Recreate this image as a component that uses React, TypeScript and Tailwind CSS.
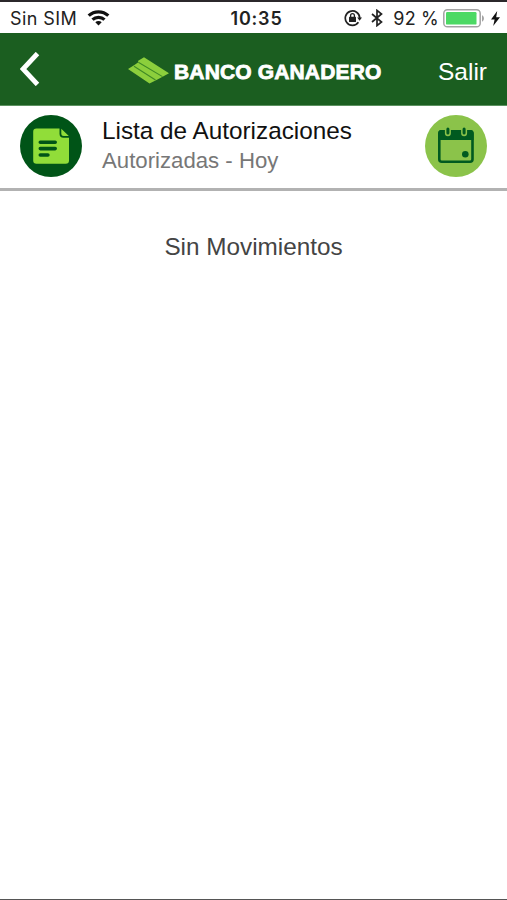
function WifiIcon() {
  return (
    <svg width="23" height="16" viewBox="0 0 22 16" fill="none" stroke="#111" strokeWidth="3.2">
      <path d="M1.2 5.7a14.2 14.2 0 0 1 19.6 0" />
      <path d="M5 9.7a8.8 8.8 0 0 1 12 0" />
      <path d="M11 15.6 7.8 12.3a4.6 4.6 0 0 1 6.4 0Z" fill="#111" stroke="none" />
    </svg>
  );
}

function RotationLockIcon() {
  return (
    <svg width="18" height="18" viewBox="0 0 18 18" fill="none" stroke="#222">
      <path d="M14.4 13.3A7.2 7.2 0 1 1 15.7 9" strokeWidth="1.7" />
      <path d="M13.2 8.6h4.8l-2.4 3.2Z" fill="#222" stroke="none" />
      <rect x="5" y="7.8" width="7" height="5.2" rx="0.6" fill="#222" stroke="none" />
      <path d="M6.6 8.2V6.6a1.9 1.9 0 0 1 3.8 0v1.6" strokeWidth="1.3" />
    </svg>
  );
}

function BluetoothIcon() {
  return (
    <svg width="12" height="18" viewBox="0 0 12 18" fill="none" stroke="#222" strokeWidth="1.7">
      <path d="M1 5l9.5 8L6 16.6V1.4L10.5 5 1 13" />
    </svg>
  );
}

function BatteryIcon() {
  return (
    <svg width="42" height="19" viewBox="0 0 42 19">
      <rect x="0.8" y="0.8" width="36.4" height="17" rx="3.6" fill="#fff" stroke="#a3a3a3" strokeWidth="1.5" />
      <rect x="3" y="3" width="30.5" height="12.6" rx="1.2" fill="#4cd964" />
      <path d="M39 6.2c2.6 1 2.6 5.4 0 6.4Z" fill="#a3a3a3" />
    </svg>
  );
}

function BoltIcon() {
  return (
    <svg width="9" height="15" viewBox="0 0 9 15">
      <path d="M6.2 0 0 8.4h3.6L2.2 15 9 6.2H5.2Z" fill="#111" />
    </svg>
  );
}

function BankLogo() {
  return (
    <svg width="42" height="27" viewBox="0 0 42 27" className="shrink-0">
      <path
        d="M0 12 6 8.3 10 5.6 10.2 3.7 16 .3 41 16.2 35.5 19.3 29 22.8 21.5 26.5Z"
        fill="#8ccf3c"
      />
      <path d="M6 9.3 27.5 23M10.3 5.2 34.5 19.6" stroke="#3f8a25" strokeWidth="1.1" />
    </svg>
  );
}

function ListIcon() {
  return (
    <svg width="62" height="62" viewBox="0 0 62 62">
      <circle cx="31" cy="31" r="31" fill="#005417" />
      <path
        d="M16.5 13.5h23v5.2a4 4 0 0 0 4 4H49v22.8a3.3 3.3 0 0 1-3.3 3.3H16.5a3.3 3.3 0 0 1-3.3-3.3V16.8a3.3 3.3 0 0 1 3.3-3.3Z"
        fill="#91dd39"
      />
      <path d="M41.3 13.8 48.8 21h-5a2.5 2.5 0 0 1-2.5-2.5Z" fill="#91dd39" />
      <path
        d="M20.3 27.2h14.9M20.3 33.6h14.9M20.3 40h7.6"
        stroke="#005417"
        strokeWidth="3.6"
        strokeLinecap="round"
      />
    </svg>
  );
}

function CalendarIcon() {
  return (
    <svg width="62" height="62" viewBox="0 0 62 62">
      <circle cx="31" cy="31" r="31" fill="#8bc34a" />
      <rect x="14.3" y="16.2" width="33.2" height="30.6" rx="2.5" fill="none" stroke="#005a20" strokeWidth="2.6" />
      <path d="M13.2 18a3 3 0 0 1 3-3h29.4a3 3 0 0 1 3 3v7H13.2Z" fill="#005a20" />
      <path d="M22.9 14v4.2M39.1 14v4.2" stroke="#8bc34a" strokeWidth="6" strokeLinecap="round" />
      <path d="M22.9 14v4M39.1 14v4" stroke="#005a20" strokeWidth="3" strokeLinecap="round" />
      <circle cx="40.3" cy="39.3" r="3.3" fill="#005a20" />
    </svg>
  );
}

function StatusBar() {
  return (
    <div className="grid h-[33px] grid-cols-[1fr_auto_1fr] items-center border-t-2 border-[#2b282b] bg-white pr-[7px] pl-[10px] pt-px font-['Inter',sans-serif] text-[#222]">
      <div className="flex items-center gap-[10px]">
        <span className="text-[18px] tracking-[0.4px]">Sin SIM</span>
        <WifiIcon />
      </div>
      <span className="pl-[3px] text-[18px] font-semibold tracking-[0.8px]">10:35</span>
      <div className="flex items-center justify-end">
        <RotationLockIcon />
        <span className="ml-[9px] flex">
          <BluetoothIcon />
        </span>
        <span className="mr-1 ml-[10px] text-[18px] tracking-[0.2px] whitespace-nowrap">92 %</span>
        <BatteryIcon />
        <span className="ml-[6px] flex">
          <BoltIcon />
        </span>
      </div>
    </div>
  );
}

function Header() {
  return (
    <header className="flex h-[73px] items-center border-b border-[#5c9160] bg-[#1b5e20] pr-5 pl-5 text-white">
      <button aria-label="Volver" className="flex w-[108px]">
        <svg width="20" height="34" viewBox="0 0 20 34" fill="none" stroke="#fff" strokeWidth="4.8">
          <path d="M17.5 1.5 3 17l14.5 15.5" />
        </svg>
      </button>
      <div className="flex items-center gap-1 pt-[2px]">
        <BankLogo />
        <span className="pt-[3px] text-[21px] font-bold tracking-[0.15px] whitespace-nowrap [-webkit-text-stroke:0.8px_white]">
          BANCO GANADERO
        </span>
      </div>
      <button className="ml-auto pt-[7px] text-[24.5px]">Salir</button>
    </header>
  );
}

export default function App() {
  return (
    <div className="flex h-[900px] w-[507px] flex-col border-b border-[#555] bg-white font-['Liberation_Sans',Arial,sans-serif]">
      <StatusBar />
      <Header />
      <section className="flex h-[85px] items-center border-b-[3px] border-[#b2b2b2] px-5 pb-[2px]">
        <ListIcon />
        <div className="ml-5 flex flex-col">
          <h1 className="text-[24.3px] leading-[30px] text-[#111]">Lista de Autorizaciones</h1>
          <p className="text-[22.2px] leading-[30px] text-[#777]">Autorizadas - Hoy</p>
        </div>
        <button aria-label="Calendario" className="ml-auto">
          <CalendarIcon />
        </button>
      </section>
      <main className="pt-[41px] text-center text-[24.3px] leading-[30px] text-[#444]">
        Sin Movimientos
      </main>
    </div>
  );
}
